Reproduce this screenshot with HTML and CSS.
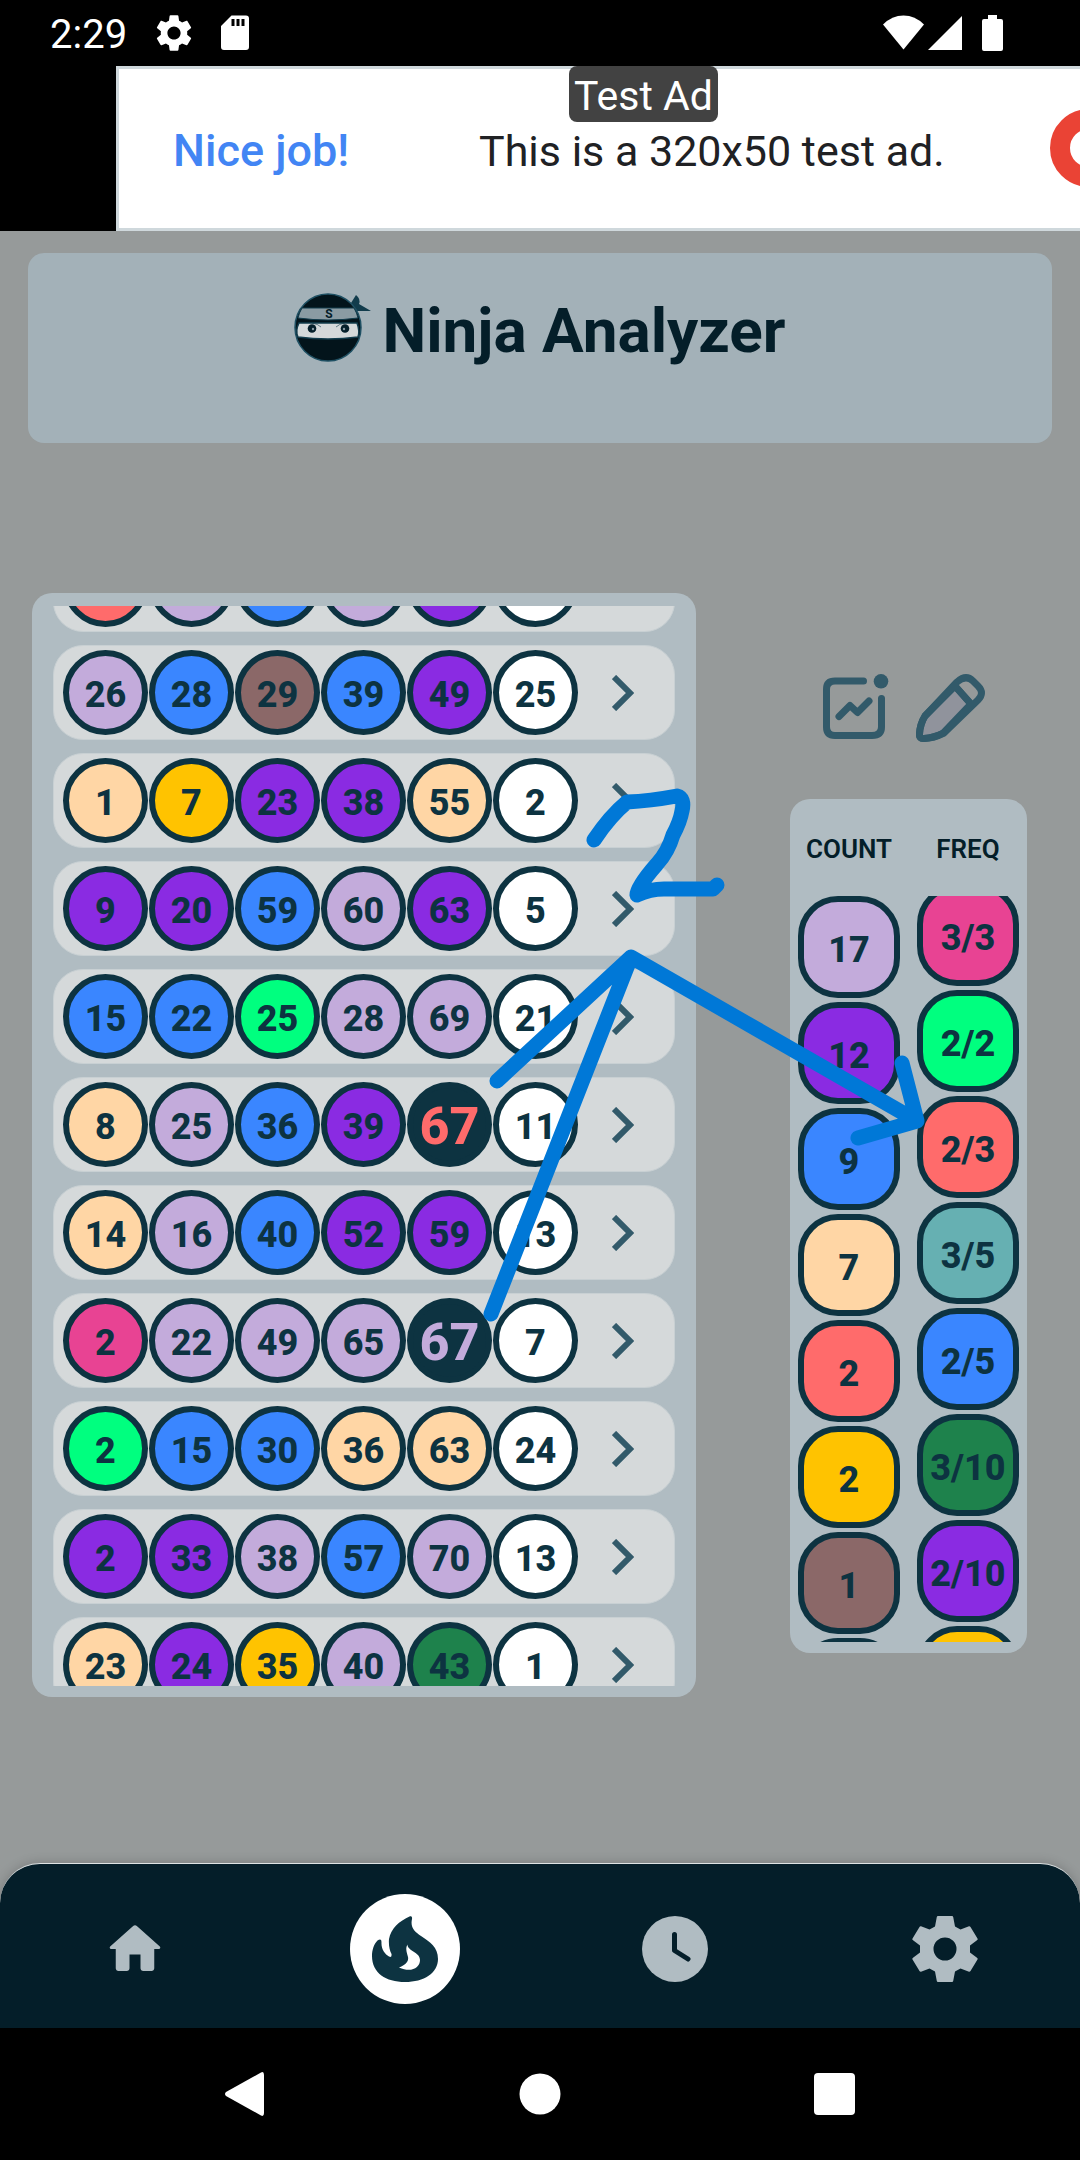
FILE: index.html
```html
<!DOCTYPE html>
<html lang="en">
<head>
<meta charset="utf-8">
<meta name="viewport" content="width=device-width, initial-scale=1">
<title>Ninja Analyzer</title>
<link rel="stylesheet" href="styles.css">
</head>
<body>
<div class="status-bar">
  <span class="status-time">2:29</span>
  <svg class="status-gear" width="36" height="36" viewBox="2.4 2.2 19.2 19.6"><path fill="#fff" d="M19.14 12.94c.04-.3.06-.61.06-.94 0-.32-.02-.64-.07-.94l2.03-1.58c.18-.14.23-.41.12-.61l-1.92-3.32c-.12-.22-.37-.29-.59-.22l-2.39.96c-.5-.38-1.03-.7-1.62-.94l-.36-2.54c-.04-.24-.24-.41-.48-.41h-3.84c-.24 0-.43.17-.47.41l-.36 2.54c-.59.24-1.13.57-1.62.94l-2.39-.96c-.22-.08-.47 0-.59.22L2.74 8.87c-.12.21-.08.47.12.61l2.03 1.58c-.05.3-.09.63-.09.94s.02.64.07.94l-2.03 1.58c-.18.14-.23.41-.12.61l1.92 3.32c.12.22.37.29.59.22l2.39-.96c.5.38 1.03.7 1.62.94l.36 2.54c.05.24.24.41.48.41h3.84c.24 0 .44-.17.47-.41l.36-2.54c.59-.24 1.13-.56 1.62-.94l2.39.96c.22.08.47 0 .59-.22l1.92-3.32c.12-.22.07-.47-.12-.61l-2.01-1.58zM12 15.6c-1.98 0-3.6-1.62-3.6-3.6s1.62-3.6 3.6-3.6 3.6 1.62 3.6 3.6-1.62 3.6-3.6 3.6z"/></svg>
  <svg class="status-card" width="28" height="36" viewBox="0 0 28 36"><path fill="#fff" fill-rule="evenodd" d="M10.500 .5H25a3 3 0 0 1 3 3V32a3 3 0 0 1-3 3H3a3 3 0 0 1-3-3V11zM10.500 4v7h3V4zm5 0v7h3V4zm5 0v7h3V4z"/></svg>
  <span class="status-spacer"></span>
  <svg width="41" height="36" viewBox="0 0 41 36"><path fill="#fff" d="M0 9.500Q9 .5 20.500 .5T41 9.500L20.500 34.500z"/></svg>
  <svg class="status-signal" width="34" height="36" viewBox="0 0 34 36"><path fill="#fff" d="M34 1v34H0z"/></svg>
  <svg class="status-battery" width="21" height="36" viewBox="0 0 21 36"><path fill="#fff" d="M6 0h9v4h4a2 2 0 0 1 2 2v28a2 2 0 0 1-2 2H2a2 2 0 0 1-2-2V6a2 2 0 0 1 2-2h4z"/></svg>
</div>

<div class="ad-strip">
  <div class="ad">
    <span class="ad-praise">Nice job!</span>
    <span class="ad-text">This is a 320x50 test ad.</span>
    <span class="ad-badge">Test Ad</span>
    <span class="ad-ring"></span>
  </div>
</div>

<main class="screen">
  <header class="title-card">
    <svg width="78" height="70" viewBox="0 0 78 70">
      <path d="M57 10L62 2Q67 6 65 11L77 18H63z" fill="#123c4c"/>
      <ellipse cx="34" cy="34.500" rx="33" ry="33.500" fill="#03141b" stroke="#1f5063" stroke-width="1.500"/>
      <path d="M8 15H60Q63 20 64 25Q34 29 4 25Q5 20 8 15z" fill="#8a9ba3" stroke="#123c4c"/>
      <path d="M5 30H63Q66 38 64 44Q34 48 4 44Q1 38 5 30z" fill="#d5d9da" stroke="#123c4c" stroke-width="1.500"/>
      <circle cx="18" cy="35.500" r="4.300" fill="#06202b"/><circle cx="51" cy="35.500" r="4.300" fill="#06202b"/>
      <circle cx="19" cy="36" r="1.200" fill="#8a9ba3"/><circle cx="50" cy="36" r="1.200" fill="#8a9ba3"/>
      <path d="M18 30Q24 31 27 34M51 30Q45 31 42 34" fill="none" stroke="#123c4c" stroke-width="0.600"/>
      <text x="35" y="25" class="logo-letter">S</text>
    </svg>
    <h1>Ninja Analyzer</h1>
  </header>

  <div class="stage">
    <section class="draws panel">
      <ul class="draw-scroll">
        <li class="draw"><span class="ball red"></span><span class="ball lilac"></span><span class="ball blue"></span><span class="ball lilac"></span><span class="ball violet"></span><span class="ball white"></span></li>
        <li class="draw"><span class="ball lilac">26</span><span class="ball blue">28</span><span class="ball brown">29</span><span class="ball blue">39</span><span class="ball violet">49</span><span class="ball white">25</span><button class="more" aria-label="Details"><svg width="22" height="36" viewBox="0 0 22 36"><path d="M2 2L18 18L2 34"/></svg></button></li>
        <li class="draw"><span class="ball peach">1</span><span class="ball amber">7</span><span class="ball violet">23</span><span class="ball violet">38</span><span class="ball peach">55</span><span class="ball white">2</span><button class="more" aria-label="Details"><svg width="22" height="36" viewBox="0 0 22 36"><path d="M2 2L18 18L2 34"/></svg></button></li>
        <li class="draw"><span class="ball violet">9</span><span class="ball violet">20</span><span class="ball blue">59</span><span class="ball lilac">60</span><span class="ball violet">63</span><span class="ball white">5</span><button class="more" aria-label="Details"><svg width="22" height="36" viewBox="0 0 22 36"><path d="M2 2L18 18L2 34"/></svg></button></li>
        <li class="draw"><span class="ball blue">15</span><span class="ball blue">22</span><span class="ball green">25</span><span class="ball lilac">28</span><span class="ball lilac">69</span><span class="ball white">21</span><button class="more" aria-label="Details"><svg width="22" height="36" viewBox="0 0 22 36"><path d="M2 2L18 18L2 34"/></svg></button></li>
        <li class="draw"><span class="ball peach">8</span><span class="ball lilac">25</span><span class="ball blue">36</span><span class="ball violet">39</span><span class="ball hit hit-red">67</span><span class="ball white">11</span><button class="more" aria-label="Details"><svg width="22" height="36" viewBox="0 0 22 36"><path d="M2 2L18 18L2 34"/></svg></button></li>
        <li class="draw"><span class="ball peach">14</span><span class="ball lilac">16</span><span class="ball blue">40</span><span class="ball violet">52</span><span class="ball violet">59</span><span class="ball white">13</span><button class="more" aria-label="Details"><svg width="22" height="36" viewBox="0 0 22 36"><path d="M2 2L18 18L2 34"/></svg></button></li>
        <li class="draw"><span class="ball pink">2</span><span class="ball lilac">22</span><span class="ball lilac">49</span><span class="ball lilac">65</span><span class="ball hit hit-lilac">67</span><span class="ball white">7</span><button class="more" aria-label="Details"><svg width="22" height="36" viewBox="0 0 22 36"><path d="M2 2L18 18L2 34"/></svg></button></li>
        <li class="draw"><span class="ball green">2</span><span class="ball blue">15</span><span class="ball blue">30</span><span class="ball peach">36</span><span class="ball peach">63</span><span class="ball white">24</span><button class="more" aria-label="Details"><svg width="22" height="36" viewBox="0 0 22 36"><path d="M2 2L18 18L2 34"/></svg></button></li>
        <li class="draw"><span class="ball violet">2</span><span class="ball violet">33</span><span class="ball lilac">38</span><span class="ball blue">57</span><span class="ball lilac">70</span><span class="ball white">13</span><button class="more" aria-label="Details"><svg width="22" height="36" viewBox="0 0 22 36"><path d="M2 2L18 18L2 34"/></svg></button></li>
        <li class="draw"><span class="ball peach">23</span><span class="ball violet">24</span><span class="ball amber">35</span><span class="ball lilac">40</span><span class="ball forest">43</span><span class="ball white">1</span><button class="more" aria-label="Details"><svg width="22" height="36" viewBox="0 0 22 36"><path d="M2 2L18 18L2 34"/></svg></button></li>
      </ul>
    </section>

    <aside class="side">
      <div class="tools">
        <button aria-label="Chart"><svg width="66" height="66" viewBox="0 0 66 66" fill="none" stroke="#325a6a" stroke-width="7" stroke-linecap="round" stroke-linejoin="round"><path d="M40.500 7H12Q3.500 7 3.500 15V53Q3.500 61.500 12 61.500H49Q58.500 61.500 58.500 53V24.500"/><path d="M16 42.500L27 31.500L34.500 38.500L46 27"/><circle cx="58" cy="7.300" r="7.300" fill="#325a6a" stroke="none"/></svg></button>
        <button aria-label="Edit"><svg width="69" height="69" viewBox="0 0 69 69" stroke="#325a6a" stroke-width="7" stroke-linejoin="round"><path fill="#90939c" d="M39 12L55 30L27.300 59Q18 64 8 64.500Q3 65 3.500 60Q4 50 9 42z"/><path fill="none" d="M3.500 60Q4 50 9 42L41 8Q50 0 57 7L62 12Q69 19 62 26L28 59Q18 64 8 64.500Q3 65 3.500 60zM39 12L55 30"/></svg></button>
      </div>
      <section class="stats panel">
        <div class="stat-col">
          <h2>COUNT</h2>
          <ul class="stat-scroll">
            <li class="chip lilac">17</li><li class="chip violet">12</li><li class="chip blue">9</li><li class="chip peach">7</li><li class="chip red">2</li><li class="chip amber">2</li><li class="chip brown">1</li><li class="chip"></li>
          </ul>
        </div>
        <div class="stat-col">
          <h2>FREQ</h2>
          <ul class="stat-scroll scrolled">
            <li class="chip pink">3/3</li><li class="chip green">2/2</li><li class="chip red">2/3</li><li class="chip teal">3/5</li><li class="chip blue">2/5</li><li class="chip forest">3/10</li><li class="chip violet">2/10</li><li class="chip amber"></li>
          </ul>
        </div>
      </section>
    </aside>

    <svg class="markup" width="1080" height="1104" viewBox="0 593 1080 1104"><path d="M594 840Q610 816 627 802Q650 801 677 796Q685 798 682 811Q680 822 673 835Q668 852 657 864Q636 888 637 895Q650 889 664 889H713L717 885M497 1081L631 957L491 1314M631 957L917 1121L902 1063M917 1121L858 1138"/></svg>
  </div>
</main>

<nav class="tabs">
  <a href="#home" aria-label="Home"><svg width="66" height="66" viewBox="0 0 24 24"><path fill="#b0bcc2" d="M10 19v-5h4v5c0 .55.45 1 1 1h3c.55 0 1-.45 1-1v-7h1.700c.46 0 .68-.57.33-.87L12.670 3.600c-.38-.34-.96-.34-1.340 0l-8.360 7.530c-.34.3-.13.87.33.87H5v7c0 .55.45 1 1 1h3c.55 0 1-.45 1-1z"/></svg></a>
  <a href="#hot" class="active" aria-label="Hot numbers"><svg width="66" height="66" viewBox="0 0 66 66"><path fill="#0d3341" fill-rule="evenodd" d="M38 .3Q40.500-.5 40 3C38 12 43 16 49 20C58 26 66 31 66 43C66 57 52 66 33 66C14 66 0 57 0 40C0 34 2 28 5.500 24.500Q9.500 22 9.500 26C9 33 13 38 17 40.500Q20 42 19.500 38C17.500 34 16.500 29 17 23C19 13 27 5 38 .3zM35.500 28.500C35 35 48 36 48 44C48 52 39 57 27 51.500C33 49 37 46 36 41C35 37 33 33 35.500 28.500z"/></svg></a>
  <a href="#history" aria-label="History"><svg width="66" height="66" viewBox="0 0 66 66"><circle cx="33" cy="33" r="33" fill="#b0bcc2"/><path d="M32.500 18.500V34.500L46 43" fill="none" stroke="#041e29" stroke-width="5" stroke-linecap="round" stroke-linejoin="round"/></svg></a>
  <a href="#settings" aria-label="Settings"><svg width="66" height="66" viewBox="0 0 66 66"><path fill="#b0bcc2" fill-rule="evenodd" d="M26 0H40Q41 0 41.200 1L43 10.500L48.500 13.500L57 10.200Q58 10 58.500 11L65.500 22.500Q66 23.500 65.300 24L58 29.500V36.500L65.300 42Q66 42.500 65.500 43.500L58.500 55Q58 56 57 55.800L48.500 52.500L43 55.500L41.200 65Q41 66 40 66H26Q25 66 24.800 65L23 55.500L17.500 52.500L9 55.800Q8 56 7.500 55L.5 43.500Q0 42.500 .7 42L8 36.500V29.500L.7 24Q0 23.500 .5 22.500L7.500 11Q8 10 9 10.200L17.500 13.500L23 10.500L24.800 1Q25 0 26 0zM33 21.500A11.500 11.500 0 1 0 33 44.500A11.500 11.500 0 1 0 33 21.500z"/></svg></a>
</nav>

<div class="system-bar">
  <button aria-label="Back"><svg width="42" height="46" viewBox="0 0 42 46"><path fill="#fff" d="M37 1.500Q40 0 40 4V42Q40 46 37 44.500L2 25Q0 23 2 21z"/></svg></button>
  <button aria-label="Home screen"><svg width="42" height="42" viewBox="0 0 42 42"><circle cx="21" cy="21" r="20.500" fill="#fff"/></svg></button>
  <button aria-label="Recent apps"><svg width="42" height="42" viewBox="0 0 42 42"><rect width="41" height="42" rx="4" fill="#fff"/></svg></button>
</div>
</body>
</html>
```
FILE: styles.css
```css
* { box-sizing: border-box; }

body {
  margin: 0;
  min-height: 100vh;
  display: flex;
  flex-direction: column;
  background: #969a9a;
  color: #041e29;
  font-family: Roboto, "Liberation Sans", sans-serif;
  overflow-x: hidden;
}

ul { list-style: none; margin: 0; padding: 0; }
h1, h2 { margin: 0; }
svg { display: block; flex: none; }

button {
  padding: 0;
  border: 0;
  background: none;
  cursor: pointer;
}

/* Status bar */
.status-bar {
  display: flex;
  align-items: center;
  height: 66px;
  padding: 0 77px 0 50px;
  background: #000;
  color: #fff;
}
.status-time { padding-top: 4px; font-size: 40px; line-height: 62px; }
.status-gear { margin-left: 29px; }
.status-card { margin-left: 29px; }
.status-spacer { flex: 1; }
.status-signal { margin-left: 4px; }
.status-battery { margin-left: 20px; }

/* Test ad */
.ad-strip {
  padding-left: 116px;
  background: #000;
  overflow: hidden;
}
.ad {
  position: relative;
  display: flex;
  align-items: center;
  height: 165px;
  padding: 4px 0 0 54px;
  border: 3px solid #cfd8dc;
  border-right: 0;
  background: #fff;
  font-size: 43px;
  line-height: 52px;
  white-space: nowrap;
}
.ad-praise { width: 306px; color: #4285f4; font-size: 45px; font-weight: 500; }
.ad-text { color: #202124; }
.ad-badge {
  position: absolute;
  top: -3px;
  left: 450px;
  padding: 4px 5px 0;
  border-radius: 8px;
  background: #424242;
  color: #fff;
  font-size: 41px;
  line-height: 52px;
}
.ad-ring {
  position: absolute;
  top: 40px;
  right: -48px;
  width: 78px;
  height: 78px;
  border: 20px solid #ea4335;
  border-radius: 50%;
}

/* Page */
.screen { flex: 1; padding-top: 22px; }

.title-card {
  display: flex;
  justify-content: center;
  align-items: flex-start;
  gap: 10px;
  height: 190px;
  margin: 0 28px;
  padding-top: 40px;
  border-radius: 16px;
  background: #a3b1b8;
}
.title-card h1 { font-size: 62px; line-height: 76px; font-weight: 700; }
.logo-letter { font-size: 12px; font-weight: 700; text-anchor: middle; fill: #041e29; }

.stage {
  position: relative;
  display: flex;
  align-items: flex-start;
  gap: 94px;
  margin-top: 150px;
  padding: 0 53px 40px 32px;
}
.panel { background: #b0bcc2; border-radius: 20px; }

/* Draw list */
.draws { flex: 1; padding: 13px 21px 11px; }
.draw-scroll {
  display: flex;
  flex-direction: column;
  gap: 13px;
  height: 1080px;
  overflow: hidden;
}
.draw {
  display: flex;
  flex: none;
  align-items: center;
  gap: 1px;
  height: 95px;
  padding-left: 9px;
  border: 1px solid #c8d0d3;
  border-radius: 30px;
  background: #d5d9da;
}
.draw:first-child { margin-top: -69px; }

.ball, .chip {
  display: flex;
  flex: none;
  align-items: center;
  justify-content: center;
  border: 6px solid #0d3341;
  color: #0d3341;
  font-size: 36px;
  font-weight: 800;
  line-height: 32px;
}
.ball { width: 85px; height: 85px; padding-top: 4px; border-radius: 50%; }
.chip { width: 102px; height: 102px; padding-top: 6px; border-radius: 40px; }

.lilac { background: #c3abdb; }
.blue { background: #3a86ff; }
.brown { background: #8b6868; }
.violet { background: #8a2be2; }
.peach { background: #ffd6a5; }
.amber { background: #ffc300; }
.green { background: #00ff7f; }
.red { background: #ff6b6b; }
.pink { background: #e84393; }
.forest { background: #1e824c; }
.teal { background: #66b0b2; }
.white { background: #fff; }
.hit { background: #0d3341; font-size: 52px; }
.hit-red { color: #ff6b6b; }
.hit-lilac { color: #c3abdb; }

.more { margin-left: 33px; }
.more path { fill: none; stroke: #325a6a; stroke-width: 6; }

/* Side column */
.side { width: 237px; padding-top: 81px; }
.tools {
  display: flex;
  gap: 27px;
  height: 125px;
  padding-left: 33px;
  align-items: flex-start;
}
.stats {
  display: flex;
  justify-content: space-between;
  padding: 0 8px 11px;
}
.stat-col { width: 102px; }
.stat-col h2 {
  height: 97px;
  font-size: 26px;
  font-weight: 600;
  line-height: 100px;
  text-align: center;
  white-space: nowrap;
}
.stat-scroll {
  display: flex;
  flex-direction: column;
  gap: 4px;
  height: 746px;
  overflow: hidden;
}
.scrolled .chip:first-child { margin-top: -12px; }

/* Pen marks laid over the lists */
.markup {
  position: absolute;
  top: 0;
  left: 0;
  pointer-events: none;
}
.markup path {
  fill: none;
  stroke: #0078d7;
  stroke-width: 15;
  stroke-linecap: round;
  stroke-linejoin: round;
}

/* Tab bar */
.tabs {
  display: grid;
  grid-template-columns: repeat(4, 1fr);
  height: 165px;
  padding-top: 6px;
  border-top: 1px solid #dfe3e4;
  border-radius: 40px 40px 0 0;
  background: #041e29;
  box-shadow: 0 0 12px rgba(0, 0, 0, .2);
  place-items: center;
}
.tabs a {
  display: grid;
  place-items: center;
  width: 110px;
  height: 110px;
  border-radius: 50%;
}
.tabs .active { background: #fff; }

/* System navigation */
.system-bar {
  position: relative;
  display: flex;
  align-items: center;
  justify-content: center;
  gap: 253px;
  height: 132px;
  background: #000;
}
```
